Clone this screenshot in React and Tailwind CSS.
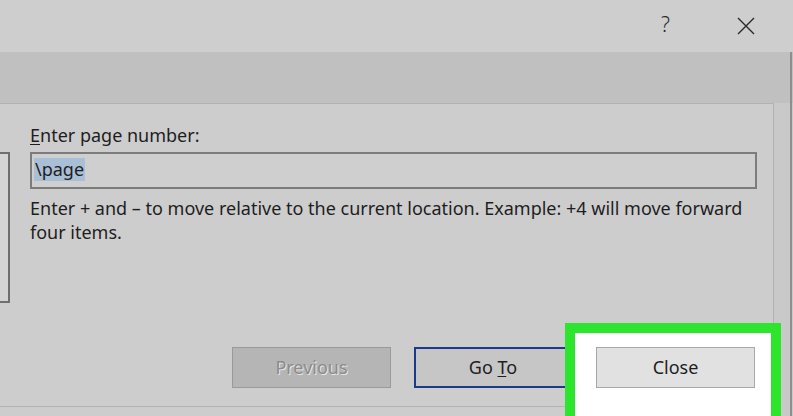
import React from "react";

export default function App() {
  const font = { fontFamily: '"Noto Sans", "Open Sans", sans-serif' };

  return (
    <div
      className="relative w-[793px] h-[416px] overflow-hidden bg-[#cdcdcd] text-[#1e1e1e]"
      style={font}
    >
      {/* title bar */}
      <div className="h-[52px] bg-[#cecece] flex items-center justify-end">
        <span className="text-[21px] font-light text-[#2a2a2a] mr-[66px] mt-[-2px]">?</span>
        <svg width="20" height="20" viewBox="0 0 20 20" className="mr-[37px]">
          <path d="M2 2 L18 18 M18 2 L2 18" stroke="#2a2a2a" strokeWidth="1.4" fill="none" />
        </svg>
      </div>

      {/* tab band */}
      <div className="flex h-[51px]">
        <div className="flex-1 bg-[#c0c0c0]" />
        <div className="w-[3px] bg-[#c0c0c0] border-l-2 border-[#8e8e8e]" />
      </div>

      {/* body */}
      <div className="flex h-[313px]">
        <div className="w-[774px] h-[304px] bg-[#cdcdcd] border-t border-r border-b border-[#b2b2b2] flex">
          {/* list box on the left */}
          <div className="w-[10px] h-[151px] mt-[48px] border-t-2 border-r-2 border-b-2 border-[#6e6e6e] bg-[#d4d4d4]" />

          <div className="ml-[20px] w-[727px] flex flex-col">
            <div className="mt-[19px] text-[18px] leading-[24px]">
              <span className="underline underline-offset-2">E</span>nter page number:
            </div>
            <div className="mt-[5px] h-[37px] border-2 border-[#7c7c7c] bg-[#cfcfcf] flex items-center px-[2px]">
              <span className="bg-[#a9bfd6] text-[18px] leading-[23px] px-[1px] -mt-[3px]">\page</span>
            </div>
            <p className="mt-[7px] text-[18px] leading-[24px]">
              Enter + and – to move relative to the current location. Example: +4 will move forward four items.
            </p>

            <div className="mt-auto mb-[18px] flex gap-[23px] ml-[202px]">
              <button className="w-[159px] h-[41px] bg-[#b5b5b5] border border-[#9a9a9a] text-[18px] text-[#8c8c8c] [text-shadow:1px_1px_0_#e6e6e6]">
                Previous
              </button>
              <button className="w-[158px] h-[41px] bg-[#c6c6c6] border-2 border-[#1c3a8a] text-[18px]">
                Go <span className="underline underline-offset-2">T</span>o
              </button>
              <button className="relative z-20 w-[159px] h-[41px] ml-[1px] bg-[#e1e1e1] border border-[#a8a8a8] text-[18px]">
                Close
              </button>
            </div>
          </div>
        </div>
        <div className="w-[16px] bg-[#c9c9c9]" />
        <div className="w-[2px] bg-[#8e8e8e]" />
        <div className="flex-1 bg-[#c9c9c9]" />
      </div>

      {/* highlight frame around Close */}
      <div className="absolute z-10 left-[565px] top-[323px] w-[216px] h-[110px] border-[10px] border-[#2ee52e] bg-white" />
    </div>
  );
}
